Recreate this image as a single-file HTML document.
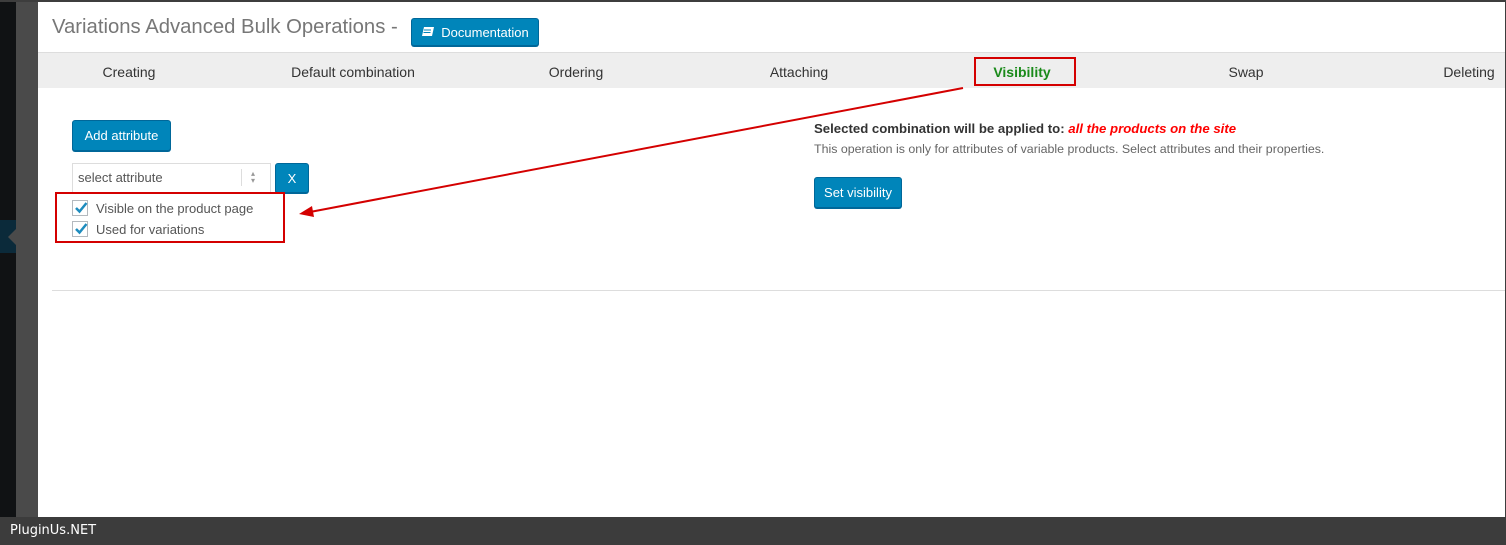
<!DOCTYPE html>
<html><head><meta charset="utf-8"><style>
*{margin:0;padding:0;box-sizing:border-box}
body{width:1506px;height:545px;position:relative;overflow:hidden;background:#fff;font-family:"Segoe UI","Liberation Sans",sans-serif;color:#32373c}
.abs{position:absolute}
.btn{position:absolute;background:#0085ba;border:1px solid #006799;border-radius:3px;color:#fff;font-size:13px;display:flex;align-items:center;justify-content:center;box-shadow:0 1px 0 #006799}
.tab{position:absolute;top:52px;height:36px;line-height:40px;font-size:14px;color:#333;transform:translateX(-50%);white-space:nowrap}
.cb{position:absolute;left:72px;width:16px;height:16px;border:1px solid #b4b9be;background:#fff}
.cb svg{position:absolute;left:1px;top:0}
.lbl{position:absolute;left:96px;font-size:13px;color:#555}
</style></head><body>
<div class="abs" style="left:0;top:0;width:16px;height:517px;background:#101214"></div>
<div class="abs" style="left:0;top:220px;width:16px;height:33px;background:#0b2a3a"></div>
<div class="abs" style="left:8px;top:229px;width:0;height:0;border-top:8px solid transparent;border-bottom:8px solid transparent;border-right:8px solid #4a4a4a"></div>
<div class="abs" style="left:16px;top:0;width:22px;height:517px;background:#4a4a4a"></div>
<div class="abs" style="left:0;top:0;width:1506px;height:2px;background:#3d3d3d"></div>
<div class="abs" style="left:1505px;top:0;width:1px;height:517px;background:#3d3d3d"></div>

<div class="abs" style="left:52px;top:16px;font-size:20.3px;color:#777;white-space:nowrap">Variations Advanced Bulk Operations -</div>
<div class="btn" style="left:411px;top:18px;width:128px;height:28px;font-size:13px"><svg width="14" height="12" viewBox="0 0 14 12" style="margin-right:6px"><path d="M3 1h10l-2 9H1z" fill="#fff"/><path d="M3 4h7M2.5 6.5h7" stroke="#0085ba" stroke-width="1"/></svg>Documentation</div>

<div class="abs" style="left:38px;top:52px;width:1467px;height:36px;background:#eee;border-top:1px solid #ddd"></div>
<div class="tab" style="left:129px">Creating</div>
<div class="tab" style="left:353px">Default combination</div>
<div class="tab" style="left:576px">Ordering</div>
<div class="tab" style="left:799px">Attaching</div>
<div class="tab" style="left:1022px;color:#1a8a1a;font-weight:600">Visibility</div>
<div class="abs" style="left:974px;top:57px;width:102px;height:29px;border:2px solid #d40000"></div>
<div class="tab" style="left:1246px">Swap</div>
<div class="tab" style="left:1469px">Deleting</div>

<div class="btn" style="left:72px;top:120px;width:99px;height:31px;font-size:13px">Add attribute</div>
<div class="abs" style="left:72px;top:163px;width:199px;height:30px;border:1px solid #ddd;background:#fff;font-size:13px;color:#555;padding:6px 0 0 5px;font-family:'Liberation Sans',sans-serif">select attribute</div>
<div class="abs" style="left:241px;top:169px;width:1px;height:17px;background:#ddd"></div>
<div class="abs" style="left:251px;top:170px;font-size:8px;color:#999;line-height:7px">▴<br>▾</div>
<div class="btn" style="left:275px;top:163px;width:34px;height:30px;font-size:13px">X</div>

<div class="cb" style="top:200px"><svg width="14" height="14" viewBox="0 0 14 14"><path d="M2 7l3.5 3.5L12.5 2" stroke="#1e8cbe" stroke-width="2.5" fill="none"/></svg></div>
<div class="lbl" style="top:201px">Visible on the product page</div>
<div class="cb" style="top:221px"><svg width="14" height="14" viewBox="0 0 14 14"><path d="M2 7l3.5 3.5L12.5 2" stroke="#1e8cbe" stroke-width="2.5" fill="none"/></svg></div>
<div class="lbl" style="top:222px">Used for variations</div>
<div class="abs" style="left:55px;top:192px;width:230px;height:51px;border:2px solid #d40000"></div>

<svg class="abs" style="left:0;top:0" width="1506" height="545"><line x1="963" y1="88" x2="310" y2="212" stroke="#d40000" stroke-width="2"/><path d="M299 214L312 206L314 217Z" fill="#d40000"/></svg>

<div class="abs" style="left:814px;top:121px;font-size:13.2px;font-weight:700;color:#333;white-space:nowrap">Selected combination will be applied to: <i style="color:#f00">all the products on the site</i></div>
<div class="abs" style="left:814px;top:142px;font-size:12.4px;color:#666;white-space:nowrap">This operation is only for attributes of variable products. Select attributes and their properties.</div>
<div class="btn" style="left:814px;top:177px;width:88px;height:31px;font-size:13px">Set visibility</div>

<div class="abs" style="left:52px;top:290px;width:1453px;height:1px;background:#ddd"></div>

<div class="abs" style="left:0;top:517px;width:1506px;height:28px;background:#3c3c3c"></div>
<div class="abs" style="left:10px;top:523px;font-size:13px;color:#fff;font-family:'DejaVu Sans',sans-serif">PluginUs.NET</div>
</body></html>
